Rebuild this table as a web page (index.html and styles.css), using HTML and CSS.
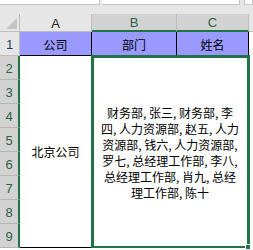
FILE: index.html
```html
<!DOCTYPE html>
<html>
<head>
<meta charset="utf-8">
<link rel="stylesheet" href="styles.css">
</head>
<body>
<div class="app">
  <div class="toolbar">
    <div class="box namebox"></div>
    <div class="box formula"></div>
    <div class="box extra"></div>
  </div>
  <div class="sheet">
    <div class="corner"><span class="tri"></span></div>
    <div class="colhdr">A</div>
    <div class="colhdr sel">B</div>
    <div class="colhdr sel">C</div>
    <div class="colhdr rest"></div>

    <div class="rowhdr">1</div>
    <div class="cell head">公司</div>
    <div class="cell head">部门</div>
    <div class="cell head">姓名</div>
    <div class="cell rest"></div>

    <div class="cell company">北京公司</div>
    <div class="cell detail">
      <span class="line">财务部, 张三, 财务部, 李</span>
      <span class="line">四, 人力资源部, 赵五, 人力</span>
      <span class="line">资源部, 钱六, 人力资源部,</span>
      <span class="line">罗七, 总经理工作部, 李八,</span>
      <span class="line">总经理工作部, 肖九, 总经</span>
      <span class="line">理工作部, 陈十</span>
    </div>
    <div class="selection"><span class="handle"></span></div>

    <div class="rowhdr sel">2</div>
    <div class="rowhdr sel">3</div>
    <div class="rowhdr sel">4</div>
    <div class="rowhdr sel">5</div>
    <div class="rowhdr sel">6</div>
    <div class="rowhdr sel">7</div>
    <div class="rowhdr sel">8</div>
    <div class="rowhdr sel">9</div>
  </div>
</div>
</body>
</html>
```

FILE: styles.css
```css
* { box-sizing: border-box; }
html, body { margin: 0; padding: 0; background: #ffffff; }
.app {
  width: 253px;
  height: 250px;
  overflow: hidden;
  display: flex;
  flex-direction: column;
  font-family: "Noto Sans CJK SC", "Liberation Sans", sans-serif;
}
.toolbar {
  height: 14px;
  flex: none;
  background: #e6e6e6;
  display: flex;
  gap: 3px;
  align-items: flex-start;
}
.box {
  height: 5px;
  background: #ffffff;
  border-bottom: 1px solid #c6c6c6;
  border-right: 1px solid #c6c6c6;
}
.namebox { width: 100px; }
.formula { width: 138px; margin-left: -1px; }
.extra { flex: 1; margin-left: 1px; border-left: 1px solid #c6c6c6; }

.sheet {
  flex: 1;
  display: grid;
  grid-template-columns: 20px 72px 85px 72px 1fr;
  grid-template-rows: 18px repeat(9, 24px) 1fr;
}
.corner {
  background: #e6e6e6;
  border-right: 1px solid #bdbdbd;
  border-bottom: 1px solid #bdbdbd;
  position: relative;
}
.tri {
  position: absolute;
  right: 2px;
  bottom: 2px;
  width: 0;
  height: 0;
  border-left: 11px solid transparent;
  border-bottom: 11px solid #c4c4c4;
}
.colhdr {
  background: #e6e6e6;
  border-right: 1px solid #bdbdbd;
  border-bottom: 1px solid #bdbdbd;
  display: flex;
  align-items: center;
  justify-content: center;
  font-family: "Liberation Sans", sans-serif;
  font-size: 13px;
  color: #222;
  padding-top: 1px;
}
.colhdr.sel {
  background: #d2d2d2;
  color: #2f5f48;
  border-bottom: 2px solid #217346;
  border-right-color: #bdbdbd;
}
.colhdr.rest { border-right: none; }
.rowhdr {
  grid-column: 1;
  background: #e6e6e6;
  border-bottom: 1px solid #bdbdbd;
  border-right: 1px solid #bdbdbd;
  display: flex;
  align-items: center;
  justify-content: center;
  font-family: "Liberation Sans", sans-serif;
  font-size: 13px;
  color: #1f3a66;
  padding-top: 2px;
}
.rowhdr.sel {
  background: #d2d2d2;
  color: #2f5f48;
  border-right: 2px solid #217346;
  border-bottom-color: #b5b5b5;
}
.cell {
  font-size: 12px;
  color: #000;
  display: flex;
  align-items: center;
  justify-content: center;
}
.cell.head {
  background: #9999ff;
  border-right: 1px solid #000;
  border-bottom: 1px solid #000;
  padding-top: 1px;
}
.cell.rest { background: #fff; }
.company {
  grid-column: 2;
  grid-row: 3 / 11;
  border-right: 1px solid #000;
  border-bottom: 1px solid #000;
}
.detail {
  grid-column: 3 / 5;
  grid-row: 3 / 11;
  border-right: 1px solid #000;
  border-bottom: 1px solid #000;
  flex-direction: column;
  line-height: 16px;
  padding-top: 2px;
}
.line { white-space: nowrap; display: block; }
.selection {
  grid-column: 3 / 5;
  grid-row: 3 / 11;
  margin: -1px -1px 0 -1px;
  border: 3px solid #217346;
  border-bottom-width: 2px;
  position: relative;
  pointer-events: none;
}
.handle {
  position: absolute;
  right: -4px;
  bottom: -4px;
  width: 6px;
  height: 6px;
  background: #217346;
  border: 1px solid #ffffff;
}
```
